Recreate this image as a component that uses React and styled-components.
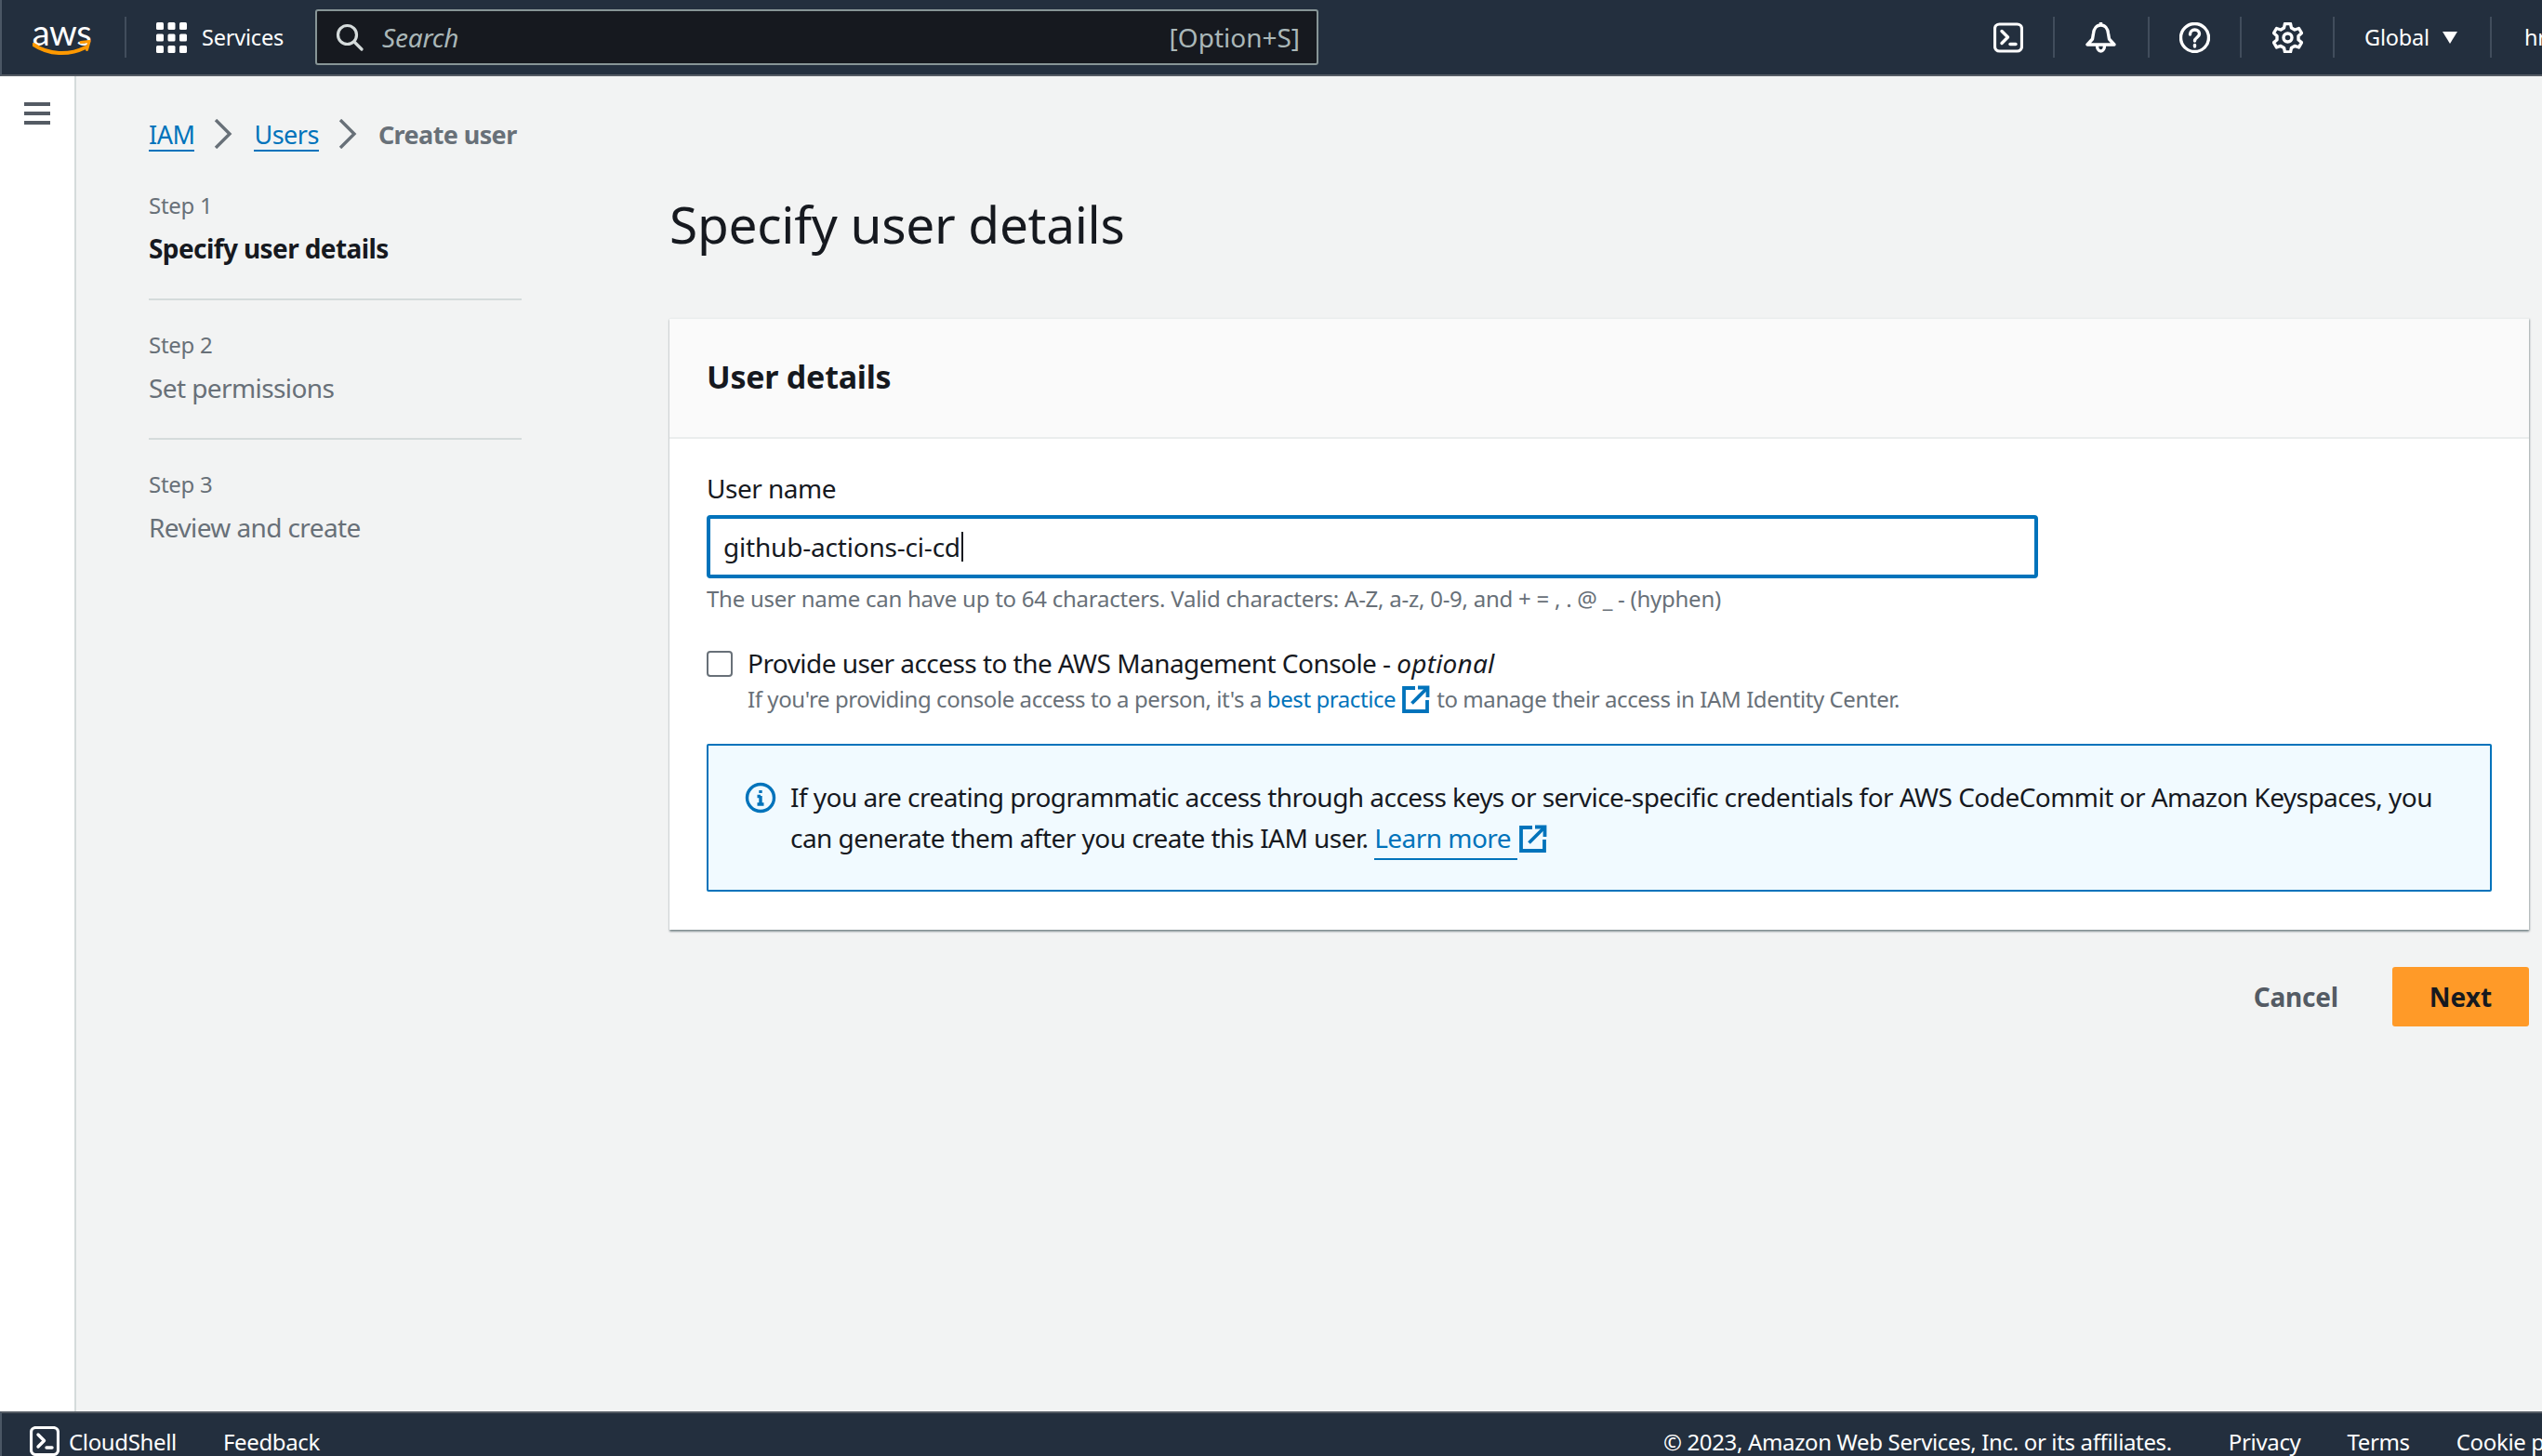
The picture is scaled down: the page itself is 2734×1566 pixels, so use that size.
import React from "react";
import styled, { createGlobalStyle } from "styled-components";

const Global = createGlobalStyle`
  html, body { margin: 0; padding: 0; height: 100%; }
  body { font-family: "Noto Sans", "Open Sans", sans-serif; color: #16191f; background: #f2f3f3; overflow: hidden; }
  * { box-sizing: border-box; }
`;

const Page = styled.div`
  width: 2734px; height: 1566px; display: flex; flex-direction: column; overflow: hidden;
`;
const TopBar = styled.header`
  flex: none; height: 82px; background: #232f3e; border-bottom: 2px solid #545b64; border-left: 2px solid #4b5765;
  display: flex; align-items: center; color: #fff; font-size: 24px; white-space: nowrap; overflow: hidden;
`;
const LogoWrap = styled.div`
  width: 63px; margin-left: 33px; height: 40px; position: relative; flex: none; display: flex; justify-content: center;
`;
const LogoText = styled.span`
  font-family: "Lato", sans-serif; font-size: 38px; line-height: 28px; letter-spacing: -0.5px; font-weight: 400; color: #fff;
`;
const LogoSmile = styled.svg`
  position: absolute; left: 0; bottom: -2px; width: 63px; height: 20px;
`;
const Sep = styled.span`
  flex: none; width: 2px; height: 44px; background: #414d5c; margin-left: ${p => p.$ml || 0}px;
`;
const NavIcon = styled.span`
  flex: none; display: flex; width: ${p => p.$w || 33}px; height: 33px; margin-left: ${p => p.$ml || 0}px; color: #fff;
  svg { width: 100%; height: 100%; display: block; }
`;
const NavText = styled.span`
  flex: none; margin-left: ${p => p.$ml || 0}px; font-size: 23.5px; letter-spacing: -0.2px;
`;
const SearchBox = styled.div`
  flex: none; width: 1079px; height: 60px; margin-left: 34px; background: #16191f; border: 2px solid #879596; border-radius: 3px;
  display: flex; align-items: center; padding: 0 18px 0 20px; color: #aab7b8; font-size: 28px;
`;
const SearchIconBox = styled.span`
  display: flex; width: 30px; height: 30px; color: #d5dbdb; svg { width: 100%; height: 100%; }
`;
const SearchPlaceholder = styled.span`
  margin-left: 20px; font-style: italic; flex: 1; letter-spacing: -0.2px;
`;
const SearchKey = styled.span` color: #aab7b8; font-size: 28px; letter-spacing: 0; `;

const Body = styled.div` flex: 1; min-height: 0; display: flex; `;
const SideRail = styled.aside`
  flex: none; width: 82px; background: #fff; border-right: 2px solid #d5dbdb; padding: 28px 0 0 26px;
`;
const Hamburger = styled.div`
  width: 28px; display: flex; flex-direction: column; gap: 6px;
  span { display: block; height: 4px; background: #545b64; }
`;
const Main = styled.main`
  flex: 1; min-width: 0; padding: 44px 14px 0 78px; display: flex; flex-direction: column;
`;
const Crumbs = styled.nav`
  display: flex; align-items: center; height: 36px;
`;
const CrumbLink = styled.a`
  color: #0073bb; font-size: 27px; line-height: 36px; border-bottom: 2px solid #0073bb; letter-spacing: -0.5px; height: 36px; display: block;
  margin-top: 2px;
`;
const CrumbNow = styled.span` color: #687078; font-weight: 700; font-size: 27px; letter-spacing: -0.6px; `;
const Chevron = styled.svg` flex: none; width: 20px; height: 32px; margin: 0 23px 0 21px; `;

const Wizard = styled.div`
  display: grid; grid-template-columns: 401px 1fr; column-gap: 159px; margin-top: 43px;
`;
const Steps = styled.ol` list-style: none; margin: 0; padding: 0; `;
const StepItem = styled.li`
  padding: ${p => p.$last ? "0" : "0 0 38px"}; margin-bottom: 32px; border-bottom: ${p => p.$last ? "0" : "2px solid #d5dbdb"};
`;
const StepLabel = styled.div` color: #687078; font-size: 24px; line-height: 32px; letter-spacing: -0.3px; `;
const StepName = styled.div`
  margin-top: 14px; font-size: 28px; line-height: 32px; letter-spacing: -0.6px; font-weight: ${p => p.$active ? 700 : 400}; color: ${p => p.$active ? "#16191f" : "#687078"};
`;

const Content = styled.section` min-width: 0; `;
const Title = styled.h1`
  margin: 0 0 65px; font-size: 55px; line-height: 72px; font-weight: 400; color: #16191f; letter-spacing: -0.3px;
`;
const Card = styled.div`
  background: #fff; box-shadow: 0 2px 2px rgba(0, 28, 36, 0.4), 1px 1px 2px rgba(0, 28, 36, 0.2);
`;
const CardHead = styled.div`
  height: 130px; background: #fafafa; border-top: 1px solid #eaeded; border-bottom: 2px solid #eaeded; padding: 0 40px 4px; display: flex; align-items: center;
  font-size: 34px; font-weight: 700; letter-spacing: -0.25px;
`;
const CardBody = styled.div` padding: 33px 40px 41px; `;
const Label = styled.div` font-size: 28px; line-height: 40px; letter-spacing: -0.5px; `;
const NameInput = styled.div`
  margin-top: 9px; width: 1432px; height: 68px; border: 4px solid #0073bb; border-radius: 4px; display: flex; align-items: center; padding-left: 14px; font-size: 28px; letter-spacing: -0.2px;
`;
const Caret = styled.span` display: inline-block; width: 2px; height: 32px; background: #16191f; margin-left: 1px; `;
const Hint = styled.div` margin-top: 5px; color: #687078; font-size: 24px; line-height: 34px; letter-spacing: -0.25px; `;
const CheckRow = styled.div` margin-top: 32px; display: grid; grid-template-columns: 28px 1fr; column-gap: 16px; `;
const CheckBox = styled.span`
  width: 28px; height: 28px; margin-top: 7px; border: 2.5px solid #687078; border-radius: 4px; background: #fff;
`;
const CheckTitle = styled.div` font-size: 28px; line-height: 40px; letter-spacing: -0.55px; em { font-style: italic; letter-spacing: 0.2px; } `;
const CheckHint = styled.div`
  grid-column: 2; color: #687078; font-size: 24px; line-height: 34px; letter-spacing: -0.42px; margin-top: 2px; display: flex; align-items: center;
`;
const Link = styled.a` color: #0073bb; `;
const ExtIcon = styled.svg`
  flex: none; display: inline-block; width: 30px; height: 30px; vertical-align: -5px; margin: 0 ${p => p.$mr}px 0 ${p => p.$ml}px; color: #0073bb;
`;
const Alert = styled.div`
  margin-top: 31px; border: 2px solid #0073bb; border-radius: 2px; background: #f1faff; padding: 33px 40px 34px 39px; display: flex; gap: 15px;
  font-size: 28px; line-height: 44px; letter-spacing: -0.54px;
`;
const AlertIcon = styled.svg` flex: none; width: 34px; height: 34px; margin-top: 6px; color: #0073bb; `;
const LearnLink = styled.a` color: #0073bb; border-bottom: 2px solid #0073bb; padding-bottom: 3px; padding-right: 7px; `;
const Actions = styled.div` margin-top: 40px; display: flex; justify-content: flex-end; align-items: center; `;
const CancelBtn = styled.span` color: #545b64; font-weight: 700; font-size: 28px; letter-spacing: -0.2px; margin-right: 58px; `;
const NextBtn = styled.span`
  width: 147px; height: 64px; background: #ff9a28; border-radius: 3px; color: #16191f; font-weight: 700; font-size: 28px; display: flex; align-items: center; justify-content: center;
`;

const Foot = styled.footer`
  flex: none; height: 48px; background: #232f3e; border-top: 2px solid #545b64; border-left: 2px solid #4b5765; color: #fff; font-size: 24px; white-space: nowrap; overflow: hidden;
  display: flex; align-items: flex-start;
`;
const FootItem = styled.span`
  flex: none; margin-left: ${p => p.$ml}px; line-height: 34px; margin-top: 14px; letter-spacing: -0.35px;
`;
const FootIcon = styled.svg` flex: none; width: 32px; height: 32px; margin: 14px 0 0 30px; color: #fff; `;

const TerminalPaths = () => (
  <>
    <rect x="1.500" y="1.500" width="29" height="29" rx="5" fill="none" stroke="currentColor" strokeWidth="3.200" />
    <path d="M9 9l6.500 6.500L9 22" fill="none" stroke="currentColor" strokeWidth="3.400" strokeLinecap="round" strokeLinejoin="round" />
    <path d="M18 23h6" fill="none" stroke="currentColor" strokeWidth="3.400" strokeLinecap="round" />
  </>
);
const External = ({ ml = 7, mr = 7 }) => (
  <ExtIcon $ml={ml} $mr={mr} viewBox="0 0 30 30" fill="none" stroke="currentColor" strokeWidth="3.800">
    <path d="M14 3H2v25h25V16" />
    <path d="M10.500 19.500 L26 4" />
    <path d="M17 2.500h10.500V13" />
  </ExtIcon>
);

export default function App() {
  return (
    <Page>
      <Global />
      <TopBar>
        <LogoWrap>
          <LogoText>aws</LogoText>
          <LogoSmile viewBox="0 0 63 20" fill="none">
            <path d="M1 6c16 11 38 12 56 3" stroke="#ff9900" strokeWidth="4" strokeLinecap="round" />
            <path d="M52 3.500l9-1-2.500 9" stroke="#ff9900" strokeWidth="3" strokeLinejoin="round" strokeLinecap="round" />
          </LogoSmile>
        </LogoWrap>
        <Sep $ml={36} />
        <NavIcon $ml={32}>
          <svg viewBox="0 0 33 33" fill="currentColor">
            {[0, 12.5, 25].map(y => [0, 12.5, 25].map(x => <rect key={`${x}-${y}`} x={x} y={y} width="8" height="8" rx="1.500" />))}
          </svg>
        </NavIcon>
        <NavText $ml={16}>Services</NavText>
        <SearchBox>
          <SearchIconBox>
            <svg viewBox="0 0 30 30" fill="none" stroke="currentColor" strokeWidth="3.200" strokeLinecap="round">
              <circle cx="12.500" cy="12.500" r="10" />
              <path d="M20 20l8 8" />
            </svg>
          </SearchIconBox>
          <SearchPlaceholder>Search</SearchPlaceholder>
          <SearchKey>[Option+S]</SearchKey>
        </SearchBox>
        <NavIcon $ml={726} $w={32}>
          <svg viewBox="0 0 32 32"><TerminalPaths /></svg>
        </NavIcon>
        <Sep $ml={32} />
        <NavIcon $ml={33}>
          <svg viewBox="0 0 33 33" fill="none" stroke="currentColor" strokeWidth="3.400" strokeLinejoin="round">
            <path d="M2 24h29l-5.500-6-1-6c-.5-5-3.500-9-8-9s-7.500 4-8 9l-1 6z" />
            <path d="M12.500 25c0 3 1.500 6 4 6s4-3 4-6" />
            <path d="M16.500 0v3" />
          </svg>
        </NavIcon>
        <Sep $ml={34} />
        <NavIcon $ml={32}>
          <svg viewBox="0 0 33 33" fill="none" stroke="currentColor" strokeWidth="3.400" strokeLinecap="round">
            <circle cx="16.500" cy="16.500" r="15" />
            <path d="M11.500 13c0-3 2.200-5 5-5s5 2 5 4.500c0 3.500-5 4-5 7.500" />
            <path d="M16.500 24.500v1.500" />
          </svg>
        </NavIcon>
        <Sep $ml={32} />
        <NavIcon $ml={33}>
          <svg viewBox="0 0 33 33" fill="none" stroke="currentColor" strokeWidth="3.400" strokeLinejoin="round">
            <path d="M13.500 1.500h6l1 4.500 3.500 2 4.500-1.500 3 5-3.500 3.200v4l3.500 3-3 5.200-4.500-1.500-3.500 2-1 4.600h-6l-1-4.600-3.500-2-4.500 1.500-3-5.200 3.500-3v-4l-3.500-3.200 3-5L9 8l3.500-2z" />
            <circle cx="16.500" cy="16.500" r="4.500" />
          </svg>
        </NavIcon>
        <Sep $ml={32} />
        <NavText $ml={32}>Global</NavText>
        <NavIcon $ml={14} $w={16}>
          <svg viewBox="0 0 16 33" fill="currentColor"><path d="M0 10h16l-8 13z" /></svg>
        </NavIcon>
        <Sep $ml={35} />
        <NavText $ml={35}>hr</NavText>
      </TopBar>
      <Body>
        <SideRail>
          <Hamburger><span /><span /><span /></Hamburger>
        </SideRail>
        <Main>
          <Crumbs>
            <CrumbLink>IAM</CrumbLink>
            <Chevron viewBox="0 0 20 32" fill="none" stroke="#687078" strokeWidth="3.400"><path d="M2 1l15 15L2 31" /></Chevron>
            <CrumbLink>Users</CrumbLink>
            <Chevron viewBox="0 0 20 32" fill="none" stroke="#687078" strokeWidth="3.400"><path d="M2 1l15 15L2 31" /></Chevron>
            <CrumbNow>Create user</CrumbNow>
          </Crumbs>
          <Wizard>
            <Steps>
              <StepItem>
                <StepLabel>Step 1</StepLabel>
                <StepName $active>Specify user details</StepName>
              </StepItem>
              <StepItem>
                <StepLabel>Step 2</StepLabel>
                <StepName>Set permissions</StepName>
              </StepItem>
              <StepItem $last>
                <StepLabel>Step 3</StepLabel>
                <StepName>Review and create</StepName>
              </StepItem>
            </Steps>
            <Content>
              <Title>Specify user details</Title>
              <Card>
                <CardHead>User details</CardHead>
                <CardBody>
                  <Label>User name</Label>
                  <NameInput>github-actions-ci-cd<Caret /></NameInput>
                  <Hint>The user name can have up to 64 characters. Valid characters: A-Z, a-z, 0-9, and + = , . @ _ - (hyphen)</Hint>
                  <CheckRow>
                    <CheckBox />
                    <CheckTitle>Provide user access to the AWS Management Console - <em>optional</em></CheckTitle>
                    <CheckHint>
                      <span>If you're providing console access to a person, it's a <Link>best practice</Link></span>
                      <External />
                      <span>to manage their access in IAM Identity Center.</span>
                    </CheckHint>
                  </CheckRow>
                  <Alert>
                    <AlertIcon viewBox="0 0 34 34" fill="none" stroke="currentColor" strokeWidth="3.400">
                      <circle cx="17" cy="17" r="14.500" />
                      <path d="M17 15v9M13.500 15.500H17M13.500 24h7" />
                      <path d="M17 9v3" />
                    </AlertIcon>
                    <div>
                      If you are creating programmatic access through access keys or service-specific credentials for AWS CodeCommit or Amazon Keyspaces, you can generate them after you create this IAM user.{" "}
                      <LearnLink>Learn more</LearnLink><External ml={2} mr={0} />
                    </div>
                  </Alert>
                </CardBody>
              </Card>
              <Actions>
                <CancelBtn>Cancel</CancelBtn>
                <NextBtn>Next</NextBtn>
              </Actions>
            </Content>
          </Wizard>
        </Main>
      </Body>
      <Foot>
        <FootIcon viewBox="0 0 32 32"><TerminalPaths /></FootIcon>
        <FootItem $ml={10}>CloudShell</FootItem>
        <FootItem $ml={50}>Feedback</FootItem>
        <FootItem $ml={1445}>© 2023, Amazon Web Services, Inc. or its affiliates.</FootItem>
        <FootItem $ml={61}>Privacy</FootItem>
        <FootItem $ml={50}>Terms</FootItem>
        <FootItem $ml={50}>Cookie preferences</FootItem>
      </Foot>
    </Page>
  );
}
